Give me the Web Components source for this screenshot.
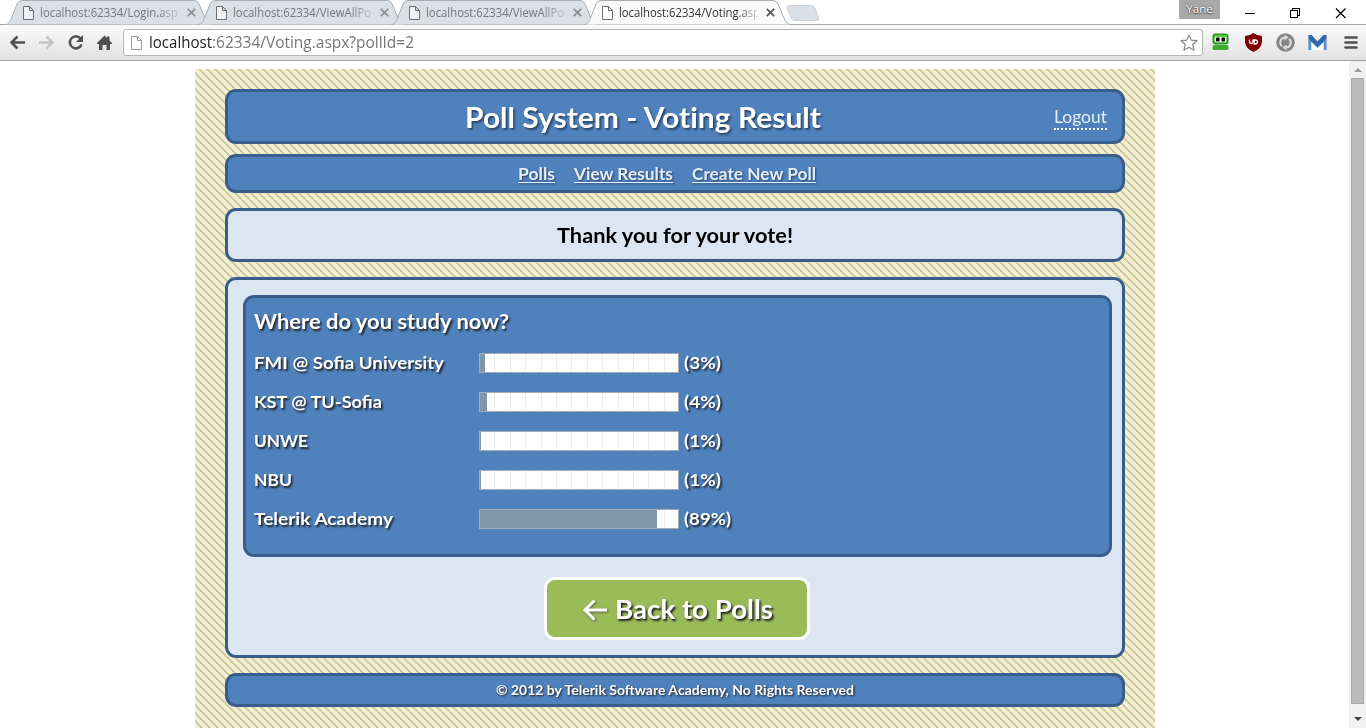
<!DOCTYPE html>
<html lang="en">
<head>
<meta charset="utf-8">
<title>Poll System - Voting Result</title>
<style>
html,body{margin:0;height:100%;overflow:hidden;background:#fff}
body{font-family:Lato,"Liberation Sans",sans-serif}
</style>
</head>
<body>
<browser-window></browser-window>
<script>
function define(name, html, setup) {
  const template = document.createElement('template');
  template.innerHTML = html;
  customElements.define(name, class extends HTMLElement {
    connectedCallback() {
      if (this.shadowRoot) return;
      this.attachShadow({ mode: 'open' }).append(template.content.cloneNode(true));
      if (setup) setup(this, this.shadowRoot);
    }
  });
}

/* Text condensed horizontally to the width given by its "w" attribute. */
define('fit-text', `<style>
:host{display:inline-block;white-space:nowrap;text-align:left}
span{display:inline-block;transform-origin:0 50%;white-space:nowrap}
:host([underlined]) span{text-decoration:underline;text-decoration-thickness:1px;text-underline-offset:2px;text-decoration-skip-ink:none}
</style><span></span>`, (el, root) => {
  const span = root.querySelector('span');
  span.textContent = el.getAttribute('text');
  const w = +el.getAttribute('w');
  el.style.width = w + 'px';
  span.style.transform = 'scaleX(' + w / span.getBoundingClientRect().width + ')';
});

define('page-icon', `<style>:host{display:block;width:11px;height:14px}svg{display:block}</style>
<svg width="11" height="14" viewBox="0 0 11 14" fill="#fff" fill-opacity=".6" stroke="currentColor"><path d="M.5.5h6l4 4v9H.5zM6.5.5v4h4"/></svg>`);

define('browser-tab', `<style>
:host{display:block;position:relative;width:193px;height:25px;color:#777;flex:none}
:host([active]){color:#333;z-index:2}
.shape{position:absolute;left:0;top:0}
.row{position:relative;display:flex;align-items:center;height:25px;padding-left:18px}
page-icon{color:#6d6d6d}
.label{margin-left:6px;width:138px;font:12.5px/20px "Open Sans","Noto Sans",sans-serif;-webkit-mask:linear-gradient(90deg,#000 118px,#0003 138px);mask:linear-gradient(90deg,#000 118px,#0003 138px)}
.close{margin-left:8.500px}
</style>
<svg class="shape" width="210" height="25"><path d="M0 24.5C4 24.5 5 22 6.500 18L12 4Q13.500.5 17 .5H189Q192.500.5 194 4L200 18Q202 24.500 207 24.500" stroke="#a9adb3"/></svg>
<div class="row"><page-icon></page-icon><div class="label"><fit-text></fit-text></div>
<svg class="close" width="9" height="9" stroke="#8b8e92" stroke-width="1.7"><path d="M.8.8l7.400 7.400M8.200.8L.8 8.200"/></svg></div>`, (el, root) => {
  const active = el.hasAttribute('active');
  root.querySelector('.shape').setAttribute('fill', active ? '#fafafa' : '#dbdfe6');
  if (active) root.querySelector('.close').setAttribute('stroke', '#555');
  const f = root.querySelector('fit-text'), n = document.createElement('fit-text');
  n.setAttribute('text', el.getAttribute('label'));
  n.setAttribute('w', el.getAttribute('w'));
  f.replaceWith(n);
});

define('tab-strip', `<style>
:host{display:flex;height:25px;padding-left:5px;background:linear-gradient(#fff 24px,#a5a5a5 24px);position:relative;box-sizing:border-box}
.new{margin:5px 0 0 9px;position:relative;flex:none}
.user{position:absolute;left:1179px;top:0;width:41px;height:19px;background:#a8a8a8;color:#fff;font:11.5px/18px "Open Sans",sans-serif;text-align:center;text-shadow:0 0 2px #444,0 1px 1px #555}
.win{position:absolute;left:1240px;top:4px}
</style>
<browser-tab label="localhost:62334/Login.asp" w="138"></browser-tab>
<browser-tab label="localhost:62334/ViewAllPo" w="138"></browser-tab>
<browser-tab label="localhost:62334/ViewAllPo" w="138"></browser-tab>
<browser-tab active label="localhost:62334/Voting.asp" w="141"></browser-tab>
<svg class="new" width="34" height="17"><path d="M1 3Q0 .5 3 .5H25Q28 .5 29 3L32.500 13Q33 15.500 31 15.500H9Q6 15.500 5 13Z" fill="#dbdfe6" stroke="#cfd3d9"/></svg>
<div class="user">Yane</div>
<svg class="win" width="110" height="18" fill="none" stroke="#000" shape-rendering="crispEdges"><path d="M5 9.500H15M50.500 6.500H57.500V13.500H50.500ZM52.500 6V4.500H59.500V11.500H58"/><path d="M96 4.500l9.500 9.500M105.500 4.500L96 14" shape-rendering="auto" stroke-width="1.200"/></svg>`);

define('tool-bar', `<style>
:host{display:flex;box-sizing:border-box;height:36px;background:linear-gradient(#fafafa,#e2e2e2);border-bottom:1px solid #a3a3a3;align-items:center}
svg{display:block;flex:none}
.omni{box-sizing:border-box;margin-left:8px;width:1080px;height:27px;border:1px solid #b5b5b5;border-radius:3px;background:#fff;display:flex;align-items:center;padding-left:7px;color:#777;font:15.500px/24px "Open Sans","Noto Sans",sans-serif}
page-icon{color:#999}
.url{display:flex;margin-left:7px;flex:1;position:relative;top:-1px}.host{color:#222}
.star{margin-right:4px}
</style>
<svg width="115" height="35" fill="none" stroke="#505050" stroke-width="2.600">
<path d="M11 17.500H25M17.500 11.500l-6 6 6 6"/>
<path d="M39 17.500H52M46.500 11.500l6 6-6 6" stroke="#c5c5c5"/>
<path d="M80.500 13.500A6 6 0 1 0 81.500 19.500" stroke-width="2.500"/><path d="M83 10v7h-7z" fill="#505050" stroke="none"/>
<path d="M97 18l7.500-7.500 2.500 2.500V11.500h2.500v4L112 18v1h-2v6h-3.500v-5h-4v5H99v-6h-2z" fill="#505050" stroke="none"/></svg>
<div class="omni"><page-icon></page-icon><div class="url"><fit-text class="host" text="localhost" w="63"></fit-text><fit-text text=":62334/Voting.aspx?pollId=2" w="202"></fit-text></div>
<svg class="star" width="18" height="18" fill="#fff" stroke="#888" stroke-width="1.200"><path d="M9 1l2.300 5.200 5.700.5-4.300 3.800 1.300 5.700L9 13.300 4 16.200l1.300-5.700L1 6.700l5.700-.5z" stroke-linejoin="round"/></svg></div>
<svg width="163" height="35">
<rect x="10.500" y="9.500" width="14" height="9" rx="2" fill="#dff5d5" stroke="#279921" stroke-width="2"/><rect x="12" y="10" width="11" height="2" fill="#5cc942"/><rect x="13" y="12.500" width="3.500" height="4" rx="1"/><rect x="18.500" y="12.500" width="3.500" height="4" rx="1"/><rect x="10" y="20.500" width="15" height="4" rx="1" fill="#38ad27" stroke="#218a1b" stroke-width=".6"/>
<path d="M50.500 8Q54.500 11 59 11V17Q58.500 23.500 50.500 27Q42.500 23.500 42 17V11Q46.500 11 50.500 8Z" fill="#800000"/><path d="M46.500 14.500v2.300a1.700 1.700 0 0 0 3.400 0v-2.300M51.200 19V15h1q2.200 0 2.200 2t-2.200 2z" fill="none" stroke="#fff" stroke-width="1.300"/>
<circle cx="82.500" cy="17.500" r="9.300" fill="#858585"/><path d="M82 12.500A5 5 0 0 0 79 21.300M83 22.500A5 5 0 0 0 86 13.700" fill="none" stroke="#ddd" stroke-width="2"/><path d="M81.500 9.500l4 3-4 3zM83.500 19.500l-4 3 4 3z" fill="#ddd"/>
<path d="M105.500 10h18v15h-18z" fill="#a9c5e2"/><path d="M108.500 10h12l-6 6.500z" fill="#eef3f8"/><path d="M108.500 17v8h12v-8l-6 6z" fill="#fff"/><path d="M105.500 10h3l6 6.500 6-6.500h3v4l-9 8.500-9-8.500z" fill="#3268a8"/><path d="M105.500 14v11h2.500v-9zM123.500 14v11H121v-9z" fill="#5b91c9"/>
<path d="M142.500 12.500H153.500M142.500 17.500H153.500M142.500 22.500H153.500" stroke="#505050" stroke-width="2.600" stroke-linecap="round"/></svg>`);

define('scroll-bar', `<style>
:host{display:flex;flex-direction:column;align-items:center;box-sizing:border-box;width:17px;background:#f1f1f1;flex:none;padding:7px 0 5px}
.thumb{box-sizing:border-box;width:13px;height:626px;background:#bbb;border:1px solid #a8a8a8;margin:6px 0 13px}
svg{display:block;flex:none}
</style><svg width="8" height="4"><path d="M0 4l4-4 4 4z" fill="#999"/></svg><div class="thumb"></div><svg width="8" height="4"><path d="M0 0h8L4 4z" fill="#444"/></svg>`);

define('poll-panel', `<style>
:host{display:block;box-sizing:border-box;border:3px solid #385d8a;border-radius:11px;background:#4f81bd;color:#fff}
:host([light]){background:#dce6f2;color:#000}
</style><slot></slot>`);

define('poll-bar', `<style>
:host{display:flex;align-items:center;height:39px;font-weight:700;font-size:17.500px;line-height:22px}
.name{width:225px}
.track{box-sizing:border-box;width:200px;height:20px;border:1px solid #a5adb2;background:repeating-linear-gradient(90deg,transparent 0 14.400px,#ececec 14.400px 15.400px) #fff;margin-right:5px}
.fill{height:18px;background:#8097aa}
</style><div class="name"></div><div class="track"><div class="fill"></div></div>`, (el, root) => {
  const text = (t, w) => {
    const n = document.createElement('fit-text');
    n.setAttribute('text', t); n.setAttribute('w', w);
    return n;
  };
  const v = el.getAttribute('value');
  root.querySelector('.name').append(text(el.getAttribute('name'), el.getAttribute('w')));
  root.querySelector('.fill').style.width = el.getAttribute('fill') + 'px';
  root.append(text('(' + v + '%)', v.length > 1 ? 47 : 37));
});

define('poll-button', `<style>
:host{display:flex;align-items:center;box-sizing:border-box;width:266px;height:63px;border:3px solid #fff;border-radius:11px;background:#9bbb59;color:#fff;font-weight:700;font-size:26px;line-height:30px;padding-left:35px;text-shadow:1.500px 1.500px 2px #222}
svg{filter:drop-shadow(1.500px 1.500px 1px #333a);margin:3px 8px 0 0;flex:none}
</style><svg width="25" height="22" fill="none" stroke="#fff" stroke-width="3"><path d="M3 11H25M12.500 1.500L3 11l9.500 9.500"/></svg><fit-text text="Back to Polls" w="158"></fit-text>`);

define('poll-page', `<style>
:host{display:block;box-sizing:border-box;width:960px;height:659px;padding:20px 30px 0;background-color:#faecd4;
background-image:url("data:image/svg+xml,%3Csvg xmlns='http://www.w3.org/2000/svg' width='8' height='8' shape-rendering='crispEdges'%3E%3Cpath fill='%23c7d3a1' d='M0 0h3v1H0zM1 1h3v1H1zM2 2h3v1H2zM3 3h3v1H3zM4 4h3v1H4zM5 5h3v1H5zM6 6h2v1H6zM0 6h1v1H0zM7 7h1v1H7zM0 7h2v1H0z'/%3E%3C/svg%3E");background-position:3px 0}
.head{height:55px;display:grid;grid-template-columns:1fr auto 1fr;align-items:center;padding:0 15px 0 12px;font-size:29px;font-weight:700;line-height:34px}
.head .title{grid-column:2;text-shadow:1.500px 1.500px 2px #2b4566;font-variant-ligatures:none;position:relative;left:-31px}
.logout{justify-self:end;font-weight:400;font-size:17px;line-height:22px;border-bottom:2px dotted #fff;color:#e5eef8;margin-top:2px;height:22px}
.nav{height:39px;margin-top:10px;display:flex;justify-content:center;align-items:center;gap:19px;padding-right:16px;font-size:17px;font-weight:700;line-height:22px;color:#e5eef8;text-shadow:1px 1px 2px #2b4566}
.msg{height:54px;margin-top:15px;display:flex;align-items:center;justify-content:center;font-size:20.800px;font-weight:700;padding:0 1px 2px 0}
.main{height:381px;margin-top:15px;padding:15px 10px 0 15px}
.poll{height:262px;padding:9px 8px;text-shadow:1.500px 1.500px 2px #222;font-weight:700}
.poll .q{font-size:20.800px;line-height:28px;display:block;height:36px}
poll-button{margin:20px 0 0 301px}
.foot{height:34px;margin-top:15px;display:flex;align-items:center;justify-content:center;font-size:12.800px;font-weight:700;text-shadow:1px 1px 2px #222}
</style>
<poll-panel class="head"><fit-text class="title" text="Poll System - Voting Result" w="356"></fit-text><fit-text class="logout" text="Logout" w="53"></fit-text></poll-panel>
<poll-panel class="nav"><fit-text underlined text="Polls" w="37"></fit-text><fit-text underlined text="View Results" w="99"></fit-text><fit-text underlined text="Create New Poll" w="124"></fit-text></poll-panel>
<poll-panel class="msg" light><fit-text text="Thank you for your vote!" w="236"></fit-text></poll-panel>
<poll-panel class="main" light>
<poll-panel class="poll"><fit-text class="q" text="Where do you study now?" w="255"></fit-text>
<poll-bar name="FMI @ Sofia University" w="190" value="3" fill="5"></poll-bar>
<poll-bar name="KST @ TU-Sofia" w="128" value="4" fill="7"></poll-bar>
<poll-bar name="UNWE" w="54" value="1" fill="1"></poll-bar>
<poll-bar name="NBU" w="38" value="1" fill="1"></poll-bar>
<poll-bar name="Telerik Academy" w="139" value="89" fill="177"></poll-bar></poll-panel>
<poll-button></poll-button>
</poll-panel>
<poll-panel class="foot"><fit-text text="© 2012 by Telerik Software Academy, No Rights Reserved" w="358"></fit-text></poll-panel>`);

define('browser-window', `<style>
:host{display:flex;flex-direction:column;width:1366px;height:728px;overflow:hidden;background:#fff}
.view{display:flex;flex:1;min-height:0}
.content{flex:1;padding:8px 0 0 195px}
</style><tab-strip></tab-strip><tool-bar></tool-bar><div class="view"><div class="content"><poll-page></poll-page></div><scroll-bar></scroll-bar></div>`);
</script>
</body>
</html>
